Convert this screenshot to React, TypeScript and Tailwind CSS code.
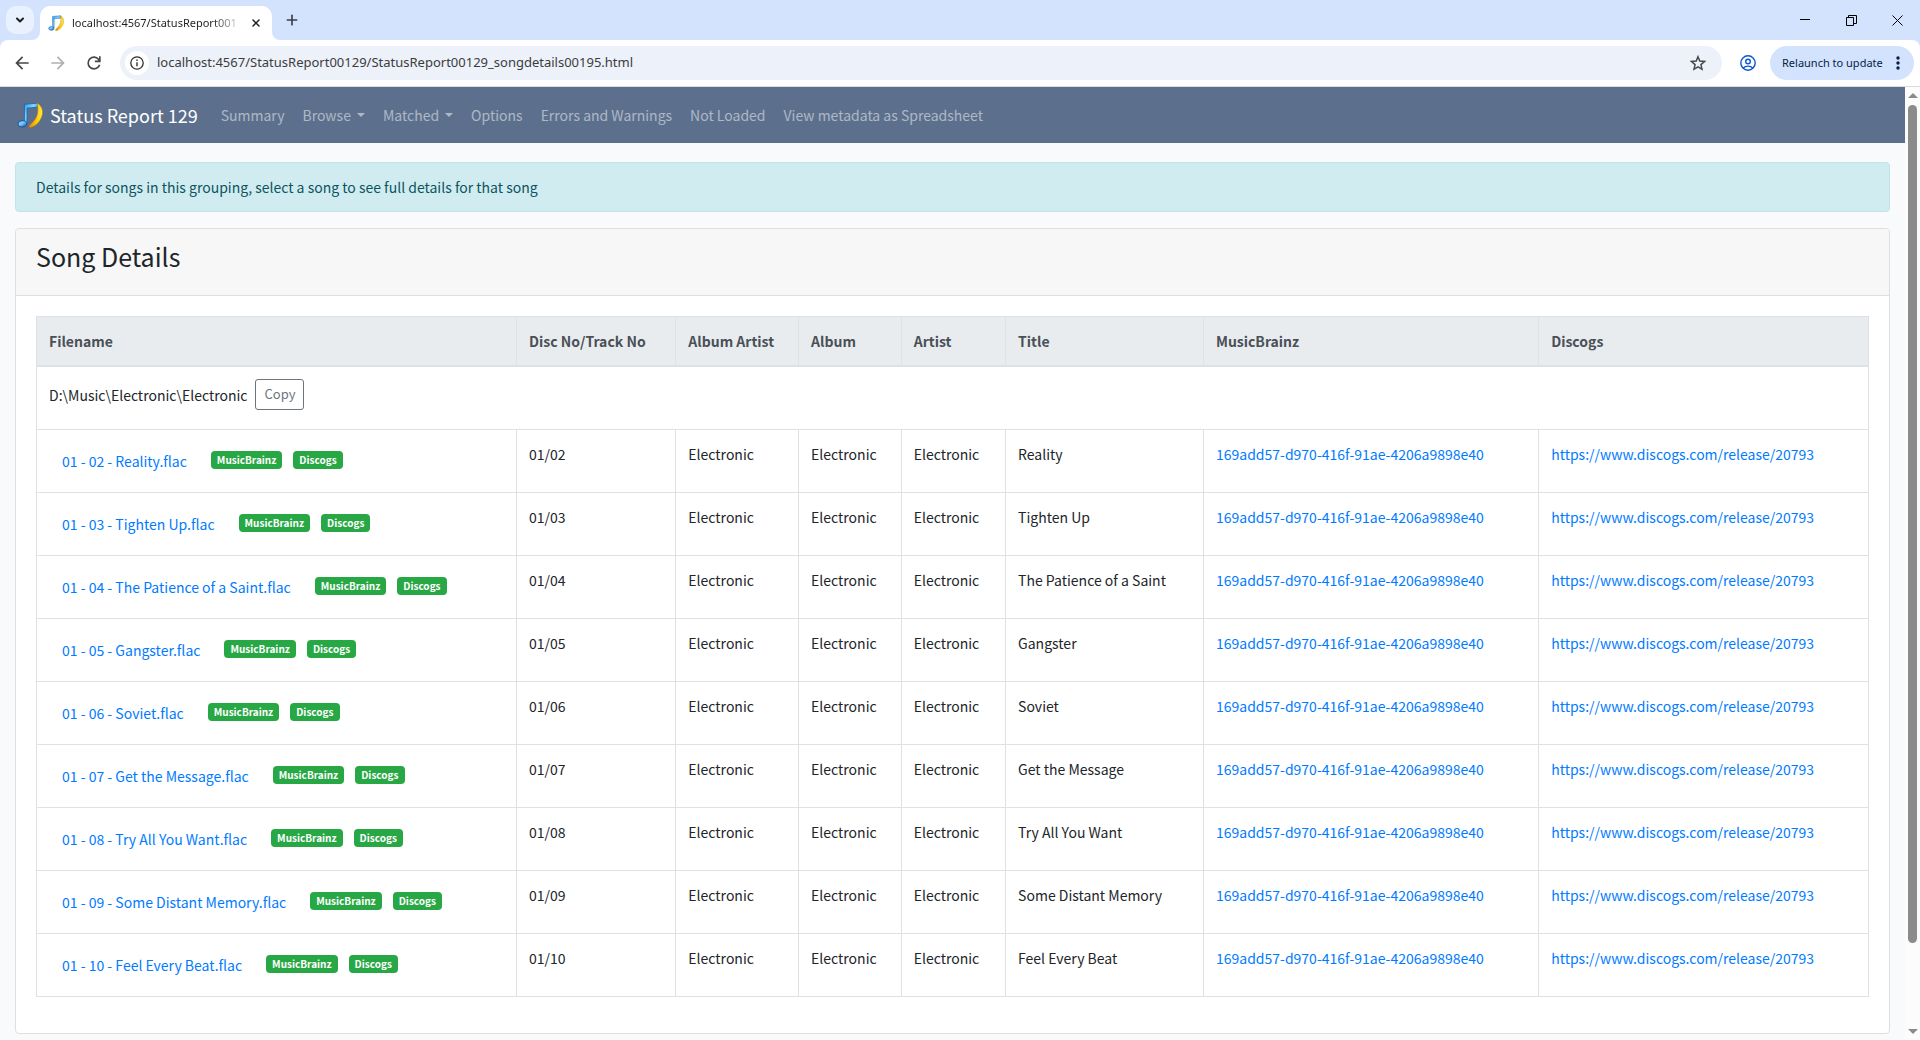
import React from 'react';
import { ChevronDown, Plus, X } from 'lucide-react';

interface Song {
  track: string;
  title: string;
}

const songs: Song[] = [
  { track: '02', title: 'Reality' },
  { track: '03', title: 'Tighten Up' },
  { track: '04', title: 'The Patience of a Saint' },
  { track: '05', title: 'Gangster' },
  { track: '06', title: 'Soviet' },
  { track: '07', title: 'Get the Message' },
  { track: '08', title: 'Try All You Want' },
  { track: '09', title: 'Some Distant Memory' },
  { track: '10', title: 'Feel Every Beat' },
];

const columns = [
  { name: 'Filename', width: 'w-[26.2%]' },
  { name: 'Disc No/Track No', width: 'w-[8.7%]' },
  { name: 'Album Artist', width: 'w-[6.7%]' },
  { name: 'Album', width: 'w-[5.6%]' },
  { name: 'Artist', width: 'w-[5.7%]' },
  { name: 'Title', width: 'w-[10.8%]' },
  { name: 'MusicBrainz', width: 'w-[18.3%]' },
  { name: 'Discogs', width: 'w-[18%]' },
];

const releaseId = '169add57-d970-416f-91ae-4206a9898e40';
const discogsUrl = 'https://www.discogs.com/release/20793';

const Logo: React.FC<{ className?: string }> = ({ className }) => (
  <svg viewBox="0 0 28 28" className={className} aria-hidden="true">
    <defs>
      <linearGradient id="note" x1="0" y1="0" x2="1" y2="1">
        <stop offset="0" stopColor="#1f9bf0" />
        <stop offset="0.4" stopColor="#7fd4ff" />
        <stop offset="1" stopColor="#0a4fb0" />
      </linearGradient>
      <linearGradient id="swoosh" x1="0" y1="0" x2="1" y2="0">
        <stop offset="0" stopColor="#e08a00" />
        <stop offset="0.5" stopColor="#ffc400" />
        <stop offset="1" stopColor="#ffee4a" />
      </linearGradient>
    </defs>
    <path d="M8 2.500 22 1.300v4.400L10.800 6.500v16H8z" fill="url(#note)" stroke="#1b5fae" strokeWidth="0.800" />
    <ellipse cx="5.800" cy="23.500" rx="4.600" ry="3.300" fill="url(#note)" stroke="#0b3f8c" strokeWidth="0.800" />
    <path d="M21.500 1c4.900 2.700 7 7.700 5.600 13.200-1.500 5.900-6.300 11.700-12.600 13.300-1.600.3-1.900-1.600-.7-2.700 4.500-3.800 7.400-7.600 8.300-12.400.7-3.800.4-7.500-.6-11.400z" fill="url(#swoosh)" stroke="#b97a10" strokeWidth="0.600" />
  </svg>
);

const TabStrip: React.FC = () => (
  <div className="flex h-10 bg-[#d3e3fd]">
    <div className="flex w-10 items-center pl-[6px]">
      <button aria-label="Search tabs" className="flex h-7 w-7 items-center justify-center rounded-[10px] bg-[#e9f1fe]">
        <ChevronDown className="h-3 w-3 text-[#1f1f1f]" strokeWidth={4} />
      </button>
    </div>
    <div className="relative mt-[6px] flex w-[232px] items-center rounded-t-[10px] bg-white pl-2 pr-2">
      <svg className="absolute -left-2 bottom-0 h-2 w-2" viewBox="0 0 8 8"><path d="M8 0v8H0a8 8 0 0 0 8-8z" fill="#fff" /></svg>
      <svg className="absolute -right-2 bottom-0 h-2 w-2" viewBox="0 0 8 8"><path d="M0 0v8h8a8 8 0 0 1-8-8z" fill="#fff" /></svg>
      <Logo className="h-4 w-4 shrink-0" />
      <span className="ml-2 whitespace-nowrap bg-gradient-to-r from-[#1f1f1f] from-85% to-[#1f1f1f]/20 bg-clip-text text-[11px] text-transparent">
        localhost:4567/StatusReport001
      </span>
      <button aria-label="Close tab" className="ml-auto flex h-4 w-4 items-center justify-center">
        <X className="h-3 w-3 text-[#1f1f1f]" strokeWidth={3} />
      </button>
    </div>
    <button aria-label="New tab" className="ml-[10px] flex w-5 items-center justify-center">
      <Plus className="h-4 w-4 text-[#3c4043]" strokeWidth={2.5} />
    </button>
    <div className="ml-auto flex items-center">
      <button aria-label="Minimize" className="flex h-10 w-[46px] items-center justify-center">
        <svg className="h-[10px] w-[10px]" viewBox="0 0 10 10"><path d="M0 4.500h10" stroke="#000" /></svg>
      </button>
      <button aria-label="Restore" className="flex h-10 w-[46px] items-center justify-center">
        <svg className="h-[11px] w-[11px]" viewBox="0 0 11 11" fill="none" stroke="#000"><path d="M.5 2.500h7v8h-7zM2.500 2.500v-2h8v8h-3" /></svg>
      </button>
      <button aria-label="Close" className="flex h-10 w-[46px] items-center justify-center">
        <svg className="h-[11px] w-[11px]" viewBox="0 0 11 11"><path d="m.5.5 10 10m0-10-10 10" stroke="#000" /></svg>
      </button>
    </div>
  </div>
);

const Toolbar: React.FC = () => (
  <div className="bg-[#d3e3fd]">
    <div className="flex h-[47px] items-center rounded-t-lg border-b border-[#dcdcdc] bg-white pr-[6px]">
      <div className="flex w-[120px] items-center gap-4 pl-3">
        <button aria-label="Back">
          <svg viewBox="0 0 24 24" className="h-5 w-5" fill="#474747"><path d="m7.825 13 5.600 5.600L12 20l-8-8 8-8 1.425 1.400L7.825 11H20v2z" /></svg>
        </button>
        <button aria-label="Forward">
          <svg viewBox="0 0 24 24" className="h-5 w-5" fill="#b0b0b0"><path d="M16.175 13H4v-2h12.175l-5.600-5.600L12 4l8 8-8 8-1.425-1.400z" /></svg>
        </button>
        <button aria-label="Reload">
          <svg viewBox="0 0 24 24" className="h-5 w-5" fill="#474747"><path d="M12 20q-3.350 0-5.675-2.325T4 12t2.325-5.675T12 4q1.725 0 3.300.713T18 6.750V4h2v7h-7V9h4.200q-.8-1.400-2.187-2.200T12 6Q9.500 6 7.750 7.750T6 12t1.750 4.250T12 18q1.925 0 3.475-1.100T17.650 14h2.100q-.7 2.650-2.850 4.325T12 20" /></svg>
        </button>
      </div>
      <div className="flex h-[34px] flex-1 items-center rounded-full bg-[#edf1fa] pl-[5px] pr-4">
        <button aria-label="Site information" className="flex h-6 w-6 items-center justify-center rounded-full bg-white">
          <svg viewBox="0 0 14 14" className="h-[14px] w-[14px]" fill="none" stroke="#303030"><circle cx="7" cy="7" r="6.200" strokeWidth="1.300" /><path d="M7 6.200v4M7 3.500v1.400" strokeWidth="1.400" /></svg>
        </button>
        <input
          aria-label="Address"
          readOnly
          className="ml-2 min-w-0 flex-1 bg-transparent text-[13px] text-[#3c3c3c] outline-none"
          value="localhost:4567/StatusReport00129/StatusReport00129_songdetails00195.html"
        />
        <button aria-label="Bookmark this tab">
          <svg viewBox="0 0 24 24" className="h-4 w-4" fill="none" stroke="#474747" strokeWidth="2.200"><path d="m12 2.500 2.700 6.600 7.100.6-5.400 4.700 1.600 7-6-3.700-6 3.700 1.600-7-5.400-4.700 7.100-.6z" /></svg>
        </button>
      </div>
      <button aria-label="Profile" className="mr-[14px] ml-[18px]">
        <svg viewBox="0 0 16 16" className="h-4 w-4" fill="none" stroke="#0b57d0" strokeWidth="1.400"><circle cx="8" cy="8" r="7.200" /><circle cx="8" cy="6.500" r="2.300" /><path d="M3.200 13c2.600-2.500 7-2.500 9.600 0" /></svg>
      </button>
      <button className="flex h-[34px] w-[144px] items-center justify-between rounded-full bg-[#d3e3fd] pr-[14px] pl-3 text-[11px] text-[#041e49]">
        Relaunch to update
        <svg viewBox="0 0 4 14" className="h-[14px] w-1" fill="#041e49"><circle cx="2" cy="2" r="1.700" /><circle cx="2" cy="7" r="1.700" /><circle cx="2" cy="12" r="1.700" /></svg>
      </button>
    </div>
  </div>
);

const NavLink: React.FC<{ label: string; menu?: boolean }> = ({ label, menu }) => (
  <a href="#" className="flex items-center gap-[6px] px-[9px] text-white/50">
    {label}
    {menu && <svg viewBox="0 0 8 4" className="h-1 w-2" fill="currentColor"><path d="M0 0h8L4 4z" /></svg>}
  </a>
);

const Badge: React.FC<{ label: string }> = ({ label }) => (
  <span className="rounded bg-[#28a745] px-[6px] text-[10px] leading-[18px] font-bold text-white">{label}</span>
);

const Scrollbar: React.FC = () => (
  <div className="flex w-[15px] shrink-0 flex-col items-center bg-[#fcfcfc] py-[6px]">
    <svg viewBox="0 0 10 5" className="h-[5px] w-[10px]" fill="#8b8b8b"><path d="M5 0l5 5H0z" /></svg>
    <div className="mt-[7px] w-[9px] flex-[839] rounded-full bg-[#8b8b8b]" />
    <div className="flex-[86]" />
    <svg viewBox="0 0 10 5" className="h-[5px] w-[10px]" fill="#8b8b8b"><path d="M0 0h10L5 5z" /></svg>
  </div>
);

const SongTable: React.FC = () => (
  <table className="mb-4 w-full border-collapse border border-[#dee2e6] text-left">
    <thead className="bg-[#e9ecef] text-[#495057]">
      <tr>
        {columns.map(({ name, width }) => (
          <th key={name} className={`${width} border border-b-2 border-[#dee2e6] p-3 font-bold whitespace-nowrap`}>{name}</th>
        ))}
      </tr>
    </thead>
    <tbody>
      <tr>
        <td colSpan={8} className="border border-[#dee2e6] px-3 pt-3 pb-[19px]">
          <div className="flex items-center gap-2">
            <span>D:\Music\Electronic\Electronic</span>
            <button className="rounded-[3px] border border-[#6c757d] px-2 pt-1 pb-[5px] text-[13px] leading-5 text-[#6c757d]">Copy</button>
          </div>
        </td>
      </tr>
      {songs.map(({ track, title }) => (
        <tr key={track} className="align-top">
          <td className="border border-[#dee2e6] p-3 whitespace-nowrap">
            <div className="flex h-[38px] items-center pl-[13px]">
              <a href="#" className="mr-6 text-[#007bff]">01 - {track} - {title}.flac</a>
              <div className="flex gap-[11px] pb-[3px]">
                <Badge label="MusicBrainz" />
                <Badge label="Discogs" />
              </div>
            </div>
          </td>
          <td className="border border-[#dee2e6] p-3">01/{track}</td>
          <td className="border border-[#dee2e6] p-3">Electronic</td>
          <td className="border border-[#dee2e6] p-3">Electronic</td>
          <td className="border border-[#dee2e6] p-3">Electronic</td>
          <td className="border border-[#dee2e6] p-3">{title}</td>
          <td className="border border-[#dee2e6] p-3"><a href="#" className="text-[#007bff]">{releaseId}</a></td>
          <td className="border border-[#dee2e6] p-3"><a href="#" className="text-[#007bff]">{discogsUrl}</a></td>
        </tr>
      ))}
    </tbody>
  </table>
);

const App: React.FC = () => {
  return (
    <div className="flex h-screen flex-col overflow-hidden font-['Noto_Sans',sans-serif]">
      <TabStrip />
      <Toolbar />

      <div className="flex min-h-0 flex-1">
        <div className="min-w-0 flex-1 overflow-hidden bg-[#f8fafc] font-['Noto_Sans_CJK_SC',sans-serif] text-sm leading-6 text-[#212529]">
          <nav className="flex h-14 items-center bg-[#5c708d] px-[17px]">
            <a href="#" className="mr-[14px] flex items-center gap-[7px] text-[18px] text-white">
              <Logo className="h-[26px] w-[26px]" />
              Status Report 129
            </a>
            <NavLink label="Summary" />
            <NavLink label="Browse" menu />
            <NavLink label="Matched" menu />
            <NavLink label="Options" />
            <NavLink label="Errors and Warnings" />
            <NavLink label="Not Loaded" />
            <NavLink label="View metadata as Spreadsheet" />
          </nav>

          <main className="px-[15px] pt-[19px]">
            <div className="mb-4 rounded border border-[#bee5eb] bg-[#d1ecf1] px-5 py-3 text-[#0c5460]">
              Details for songs in this grouping, select a song to see full details for that song
            </div>

            <section className="rounded border border-[#dfdfdf] bg-white">
              <div className="rounded-t border-b border-[#dfdfdf] bg-[#f7f7f7] px-5 pt-3 pb-6">
                <h3 className="text-[25px] leading-[30px]">Song Details</h3>
              </div>
              <div className="p-5">
                <SongTable />
              </div>
            </section>
          </main>
        </div>
        <Scrollbar />
      </div>
    </div>
  );
};

export default App;
